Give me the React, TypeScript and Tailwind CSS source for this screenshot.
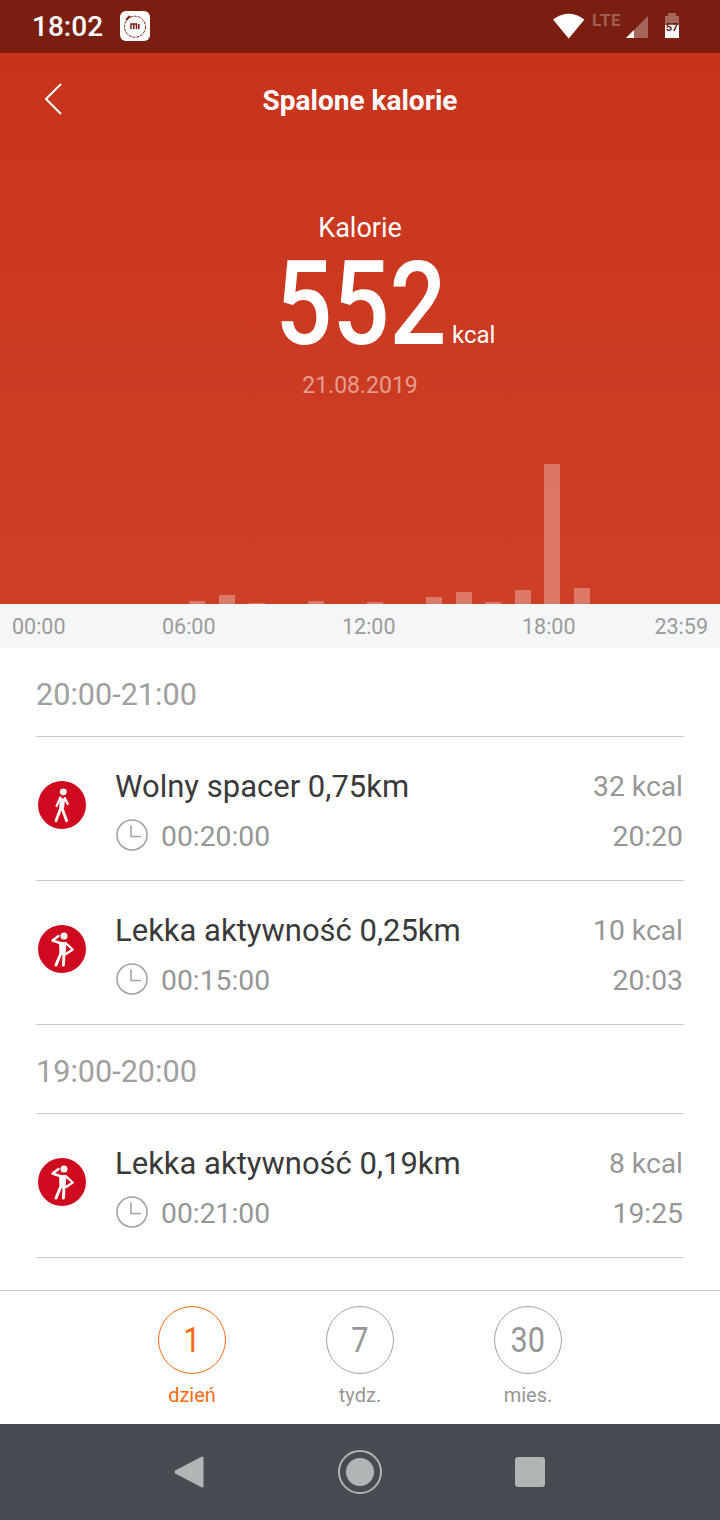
import React from "react";

const bars: Record<number, number> = { 6: 3, 7: 9, 8: 1, 10: 3, 12: 2, 14: 7, 15: 12, 16: 2, 17: 14, 18: 140, 19: 16 };

function WalkIcon() {
  return (
    <svg viewBox="0 0 48 48" className="w-12 h-12 shrink-0">
      <circle cx="24" cy="24" r="24" fill="#cf0a1f" />
      <circle cx="25.3" cy="10.8" r="3.4" fill="#fff" />
      <g stroke="#fff" fill="none" strokeLinecap="round" strokeLinejoin="round">
        <path d="M24.6 17.5 L23.6 27" strokeWidth="5" strokeLinecap="butt" />
        <path d="M22.8 27 L18 39.8" strokeWidth="2.8" />
        <path d="M24 27 L28.6 39.8" strokeWidth="2.8" />
        <path d="M22.4 16.5 L18.6 25" strokeWidth="2.2" />
        <path d="M26.8 17 L29.8 23" strokeWidth="2.2" />
      </g>
    </svg>
  );
}

function ActiveIcon() {
  return (
    <svg viewBox="0 0 48 48" className="w-12 h-12 shrink-0">
      <circle cx="24" cy="24" r="24" fill="#cf0a1f" />
      <circle cx="26" cy="11" r="3.5" fill="#fff" />
      <path d="M21 17 H28.5 L27.5 30 H21.5 Z" fill="#fff" />
      <g stroke="#fff" fill="none" strokeLinecap="round" strokeLinejoin="round">
        <path d="M20.5 11 L14.5 15.5 L22 18" strokeWidth="2.4" />
        <path d="M27.5 18 L34.8 24.5 L28 29" strokeWidth="2.2" />
        <path d="M22.6 29 L18 40" strokeWidth="3" />
        <path d="M26 29 L25.4 40" strokeWidth="3" />
      </g>
    </svg>
  );
}

function Clock() {
  return (
    <svg viewBox="0 0 32 32" className="w-8 h-8 shrink-0 mb-[4px]" fill="none" stroke="#a3a3a3" strokeWidth="1.6">
      <circle cx="16" cy="16" r="15" />
      <path d="M15 6.5 V17.5 H25" />
    </svg>
  );
}

function Row({ icon, title, dur, kcal, time }: { icon: React.ReactNode; title: string; dur: string; kcal: string; time: string }) {
  return (
    <div className="h-[144px] border-b border-[#c9c9c9] flex items-center">
      <div className="w-[80px] pl-[2px] mb-[8px]">{icon}</div>
      <div className="flex-1 flex flex-col pt-[6px]">
        <div className="text-[31px] leading-[40px] text-[#3a3a3a] mb-[10px] -ml-[1px]">{title}</div>
        <div className="flex items-center gap-[13px] text-[28.3px] leading-[40px] text-[#969696]">
          <Clock />
          <span>{dur}</span>
        </div>
      </div>
      <div className="flex flex-col items-end text-[#969696] text-[28.3px] leading-[40px] gap-[10px] pt-[6px] pr-[1px]">
        <span>{kcal}</span>
        <span>{time}</span>
      </div>
    </div>
  );
}

function Section({ label }: { label: string }) {
  return <div className="h-[89px] border-b border-[#c9c9c9] flex items-center text-[30.6px] text-[#a0a0a0] pt-[6px]">{label}</div>;
}

function Tab({ n, label, active }: { n: string; label: string; active?: boolean }) {
  return (
    <div className={`w-[168px] flex flex-col items-center ${active ? "text-[#ff6a13]" : "text-[#969696]"}`}>
      <div className={`w-[68px] h-[68px] rounded-full border flex items-center justify-center ${active ? "border-[#ff6a13]" : "border-[#a3a3a3]"}`}>
        <span className="text-[35px] leading-[40px] scale-x-[0.875] pt-[2px]">{n}</span>
      </div>
      <div className="text-[20px] leading-[24px] mt-[9px]">{label}</div>
    </div>
  );
}

export default function App() {
  return (
    <div className="w-[720px] h-[1520px] flex flex-col overflow-hidden bg-white font-['Roboto',sans-serif]">
      <div className="h-[53px] shrink-0 bg-[#7a1f10] flex items-center text-white relative">
        <span className="ml-[32px] text-[28px] font-medium leading-none">18:02</span>
        <svg viewBox="0 0 30 30" className="w-[30px] h-[30px] ml-[17px] mt-[-1px]">
          <rect width="30" height="30" rx="6" fill="#fff" />
          <circle cx="15" cy="15.7" r="10.5" fill="none" stroke="#7a1f10" strokeWidth="1" strokeDasharray="3 1" />
          <path d="M6 9 L10 5" stroke="#7a1f10" strokeWidth="2" />
          <path d="M11 18 V13 H16.5 V18 M13.8 13.5 V18 M18.8 13 V18" fill="none" stroke="#7a1f10" strokeWidth="1.5" />
        </svg>
        <svg viewBox="0 0 167 30" className="absolute left-[553px] top-[12px] w-[167px] h-[30px]">
          <path d="M0 6.5 Q15.5 -5 31.5 6.5 L15.7 25.5 Z" fill="#fff" transform="translate(0 1)" />
          <path d="M73 26 L95 4 V26 Z" fill="#fff" fillOpacity="0.32" />
          <path d="M73 26 L81 18 V26 Z" fill="#fff" />
          <path d="M115 4 V1 H123 V4 H126 V13 H112 V4 Z" fill="#fff" fillOpacity="0.32" />
          <rect x="112" y="13" width="14" height="13" fill="#fff" />
        </svg>
        <span className="absolute left-[592px] top-[10px] text-[17px] leading-[20px] font-bold tracking-[0.6px] text-white/30">LTE</span>
        <span className="absolute left-[665px] top-[22px] w-[14px] text-center text-[11px] leading-[12px] font-bold text-[#5a1a10]">57</span>
      </div>

      <div className="h-[551px] shrink-0 bg-gradient-to-b from-[#c9331b] to-[#cd4027] flex flex-col text-white">
        <div className="h-[94px] shrink-0 flex items-center relative justify-center pt-[1px]">
          <svg viewBox="0 0 18 32" className="absolute left-[45px] top-[30px] w-[18px] h-[32px]" fill="none" stroke="#fff" strokeWidth="2">
            <path d="M16 1 L1 16 L16 31" />
          </svg>
          <span className="text-[28px] font-bold">Spalone kalorie</span>
        </div>
        <div className="text-center text-[27px] leading-[30px] mt-[66px]">Kalorie</div>
        <div className="flex justify-center items-end h-[106px] relative mt-[8px]">
          <span className="text-[116px] leading-[106px] font-medium scale-x-[0.865] ml-[1px]">552</span>
          <span className="absolute left-[452px] top-[69px] text-[24px] leading-[30px]">kcal</span>
        </div>
        <div className="text-center text-[23px] leading-[28px] text-white/50 mt-[15px]">21.08.2019</div>
        <div className="flex-1 flex items-end pl-[11.8px]">
          {Array.from({ length: 24 }, (_, i) => (
            <div key={i} className="w-[29.6px] shrink-0 flex items-end">
              {bars[i] ? <div className="w-[16px] bg-white/30" style={{ height: bars[i] }} /> : null}
            </div>
          ))}
        </div>
      </div>

      <div className="h-[44px] shrink-0 bg-[#f5f6f8] relative text-[21.5px] leading-[46px] text-[#9b9b9b] flex justify-between px-[12px]">
        <span>00:00</span>
        <span className="absolute left-[162px]">06:00</span>
        <span className="absolute left-[342px]">12:00</span>
        <span className="absolute left-[522px]">18:00</span>
        <span>23:59</span>
      </div>

      <div className="h-[642px] shrink-0 overflow-hidden px-[36px]">
        <Section label="20:00-21:00" />
        <Row icon={<WalkIcon />} title="Wolny spacer 0,75km" dur="00:20:00" kcal="32 kcal" time="20:20" />
        <Row icon={<ActiveIcon />} title="Lekka aktywność 0,25km" dur="00:15:00" kcal="10 kcal" time="20:03" />
        <Section label="19:00-20:00" />
        <Row icon={<ActiveIcon />} title="Lekka aktywność 0,19km" dur="00:21:00" kcal="8 kcal" time="19:25" />
      </div>

      <div className="h-[134px] shrink-0 border-t border-[#cccccc] flex justify-center pt-[15px]">
        <Tab n="1" label="dzień" active />
        <Tab n="7" label="tydz." />
        <Tab n="30" label="mies." />
      </div>

      <div className="flex-1 bg-[#464c52] flex items-center justify-center">
        <div className="w-[168px] flex justify-center">
          <svg viewBox="0 0 30 34" className="w-[30px] h-[34px] mr-[7px]">
            <path d="M28 1.5 Q29.5 1 29.5 3 V31 Q29.5 33 28 32.5 L1 18.5 Q0 17 1 15.5 Z" fill="#b0b5b6" />
          </svg>
        </div>
        <div className="w-[168px] flex justify-center">
          <div className="w-[44px] h-[44px] rounded-full border-2 border-[#b0b5b6] flex items-center justify-center">
            <div className="w-[28px] h-[28px] rounded-full bg-[#b0b5b6]" />
          </div>
        </div>
        <div className="w-[168px] flex justify-center">
          <div className="w-[30px] h-[30px] rounded-[3px] bg-[#b0b5b6] ml-[4px]" />
        </div>
      </div>
    </div>
  );
}
